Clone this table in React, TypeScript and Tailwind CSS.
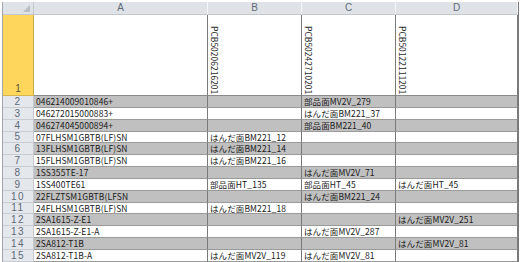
const font = "font-['Noto_Sans_CJK_JP',sans-serif]";

type Row = { n: number; h: number; a: string; b?: string; c?: string; d?: string };

const rows: Row[] = [
  { n: 2, h: 12, a: '046214009010846+', c: '部品面MV2V_279' },
  { n: 3, h: 12, a: '046272015000883+', c: 'はんだ面BM221_37' },
  { n: 4, h: 12, a: '046274045000894+', c: '部品面BM221_40' },
  { n: 5, h: 11, a: '07FLHSM1GBTB(LF)SN', b: 'はんだ面BM221_12' },
  { n: 6, h: 12, a: '13FLHSM1GBTB(LF)SN', b: 'はんだ面BM221_14' },
  { n: 7, h: 12, a: '15FLHSM1GBTB(LF)SN', b: 'はんだ面BM221_16' },
  { n: 8, h: 12, a: '1SS355TE-17', c: 'はんだ面MV2V_71' },
  { n: 9, h: 12, a: '1SS400TE61', b: '部品面HT_135', c: '部品面HT_45', d: 'はんだ面HT_45' },
  { n: 10, h: 12, a: '22FLZTSM1GBTB(LFSN', c: 'はんだ面BM221_24' },
  { n: 11, h: 11, a: '24FLHSM1GBTB(LF)SN', b: 'はんだ面BM221_18' },
  { n: 12, h: 12, a: '2SA1615-Z-E1', d: 'はんだ面MV2V_251' },
  { n: 13, h: 12, a: '2SA1615-Z-E1-A', c: 'はんだ面MV2V_287' },
  { n: 14, h: 12, a: '2SA812-T1B', d: 'はんだ面MV2V_81' },
  { n: 15, h: 12, a: '2SA812-T1B-A', b: 'はんだ面MV2V_119', c: 'はんだ面MV2V_81' },
];

const cols = 'grid grid-cols-[31px_174px_94px_94px_122px]';

const Cell = ({ text, fill }: { text?: string; fill: string }) => (
  <div
    className={`${fill} flex items-center overflow-hidden whitespace-nowrap border-r border-b border-r-[#7a7a7a] border-b-[#9a9a9a] pl-[2px] text-[8.5px] leading-none tracking-[0.1px] text-[#1a1a1a]`}
  >
    {text}
  </div>
);

const Vertical = ({ text }: { text: string }) => (
  <div className="flex flex-col items-start justify-end border-r border-b border-r-[#7a7a7a] border-b-[#8a8a8a] bg-white pb-[1px] pl-[2px]">
    <span className="text-[8.5px] leading-none text-[#2a2a2a] [writing-mode:vertical-rl]">{text}</span>
  </div>
);

export default function App() {
  return (
    <div className={`h-[262px] w-[520px] overflow-hidden bg-white pt-[2px] pl-[2px] ${font}`}>
      <div className="w-[517px] border-l border-r border-l-[#a0a4aa] border-r-[#7a7a7a]">
        <div className={`${cols} h-[13px]`}>
          <div className="relative border-r border-b border-[#c4c8ce] bg-[#dfe2e7]">
            <div className="absolute right-[3px] bottom-[2px] h-0 w-0 border-b-[7px] border-l-[7px] border-b-[#b9bdc4] border-l-transparent" />
          </div>
          {['A', 'B', 'C', 'D'].map((l) => (
            <div
              key={l}
              className="flex items-center justify-center overflow-hidden border-r border-b border-r-[#f4f5f7] border-b-[#c4c8ce] bg-[#dfe2e7] font-['Liberation_Sans',sans-serif] text-[10px] leading-none text-[#5f6b78]"
            >
              {l}
            </div>
          ))}
        </div>

        <div className={`${cols} h-[81px]`}>
          <div className="flex items-end justify-center overflow-hidden border-r border-b border-r-[#c9a94a] border-b-[#d9b54e] bg-[#ffd65c] pb-[1px] font-['Liberation_Sans',sans-serif] text-[10px] leading-none text-[#5e5535]">
            1
          </div>
          <div className="border-r border-b border-r-[#7a7a7a] border-b-[#8a8a8a] bg-white" />
          <Vertical text="PCB50206216201" />
          <Vertical text="PCB50242710201" />
          <Vertical text="PCB50122111201" />
        </div>

        {rows.map((r) => {
          const fill = r.n % 2 === 0 ? 'bg-[#c0c0c0]' : 'bg-white';
          return (
            <div key={r.n} className={cols} style={{ height: r.h }}>
              <div className="flex items-center justify-center overflow-hidden border-r border-b border-r-[#c4c8ce] border-b-[#c9cdd3] bg-[#e4e7ec] font-['Liberation_Sans',sans-serif] text-[10px] leading-none tracking-[1.5px] text-[#5d6a78]">
                {r.n}
              </div>
              <Cell text={r.a} fill={fill} />
              <Cell text={r.b} fill={fill} />
              <Cell text={r.c} fill={fill} />
              <Cell text={r.d} fill={fill} />
            </div>
          );
        })}
      </div>
    </div>
  );
}
